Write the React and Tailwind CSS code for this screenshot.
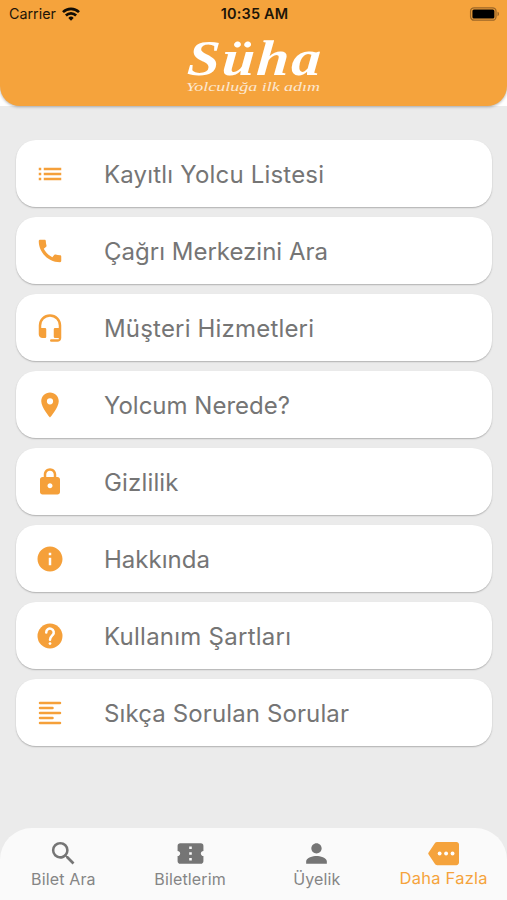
import React from 'react'
import {
  MdConfirmationNumber,
  MdInfo,
  MdList,
  MdPerson,
  MdSearch,
} from 'react-icons/md'

const icon = (children) => (
  <svg viewBox="0 0 24 24" className="size-[30px]" fill="currentColor">{children}</svg>
)

const items = [
  { label: 'Kayıtlı Yolcu Listesi', width: 220, icon: <MdList className="size-[30px]" /> },
  {
    label: 'Çağrı Merkezini Ara',
    width: 224,
    icon: icon(<path d="M20.01 15.38c-1.23 0-2.42-.2-3.53-.56a.98.98 0 0 0-1.01.24l-1.57 1.97c-2.83-1.35-5.48-3.9-6.89-6.83l1.95-1.66c.27-.28.35-.67.24-1.02-.37-1.11-.56-2.3-.56-3.53 0-.54-.45-.99-.99-.99H4.19C3.65 3 3 3.24 3 3.99 3 13.28 10.73 21 20.01 21c.71 0 .99-.63.99-1.18v-3.45c0-.54-.45-.99-.99-.99z" />),
  },
  {
    label: 'Müşteri Hizmetleri',
    width: 210,
    icon: icon(<path d="M12 1a9 9 0 0 0-9 9v7c0 1.66 1.34 3 3 3h2a1 1 0 0 0 1-1v-6a1 1 0 0 0-1-1H5v-2a7 7 0 0 1 14 0v2h-3a1 1 0 0 0-1 1v6a1 1 0 0 0 1 1h3v1h-6a1 1 0 0 0 0 2h5c1.66 0 3-1.34 3-3V10a9 9 0 0 0-9-9z" />),
  },
  {
    label: 'Yolcum Nerede?',
    width: 186,
    icon: icon(<path d="M12 2C8.13 2 5 5.13 5 9c0 5.25 7 13 7 13s7-7.75 7-13c0-3.87-3.13-7-7-7zm0 9.5a2.5 2.5 0 0 1 0-5 2.5 2.5 0 0 1 0 5z" />),
  },
  {
    label: 'Gizlilik',
    width: 74.5,
    icon: icon(<path d="M18 8h-1V6c0-2.76-2.24-5-5-5S7 3.24 7 6v2H6c-1.1 0-2 .9-2 2v10c0 1.1.9 2 2 2h12c1.1 0 2-.9 2-2V10c0-1.1-.9-2-2-2zm-6 9c-1.1 0-2-.9-2-2s.9-2 2-2 2 .9 2 2-.9 2-2 2zM9 8V6c0-1.66 1.34-3 3-3s3 1.34 3 3v2H9z" />),
  },
  { label: 'Hakkında', width: 106, icon: <MdInfo className="size-[30px]" /> },
  {
    label: 'Kullanım Şartları',
    width: 187,
    icon: icon(
      <>
        <circle cx="12" cy="12" r="10" />
        <path d="M9 9.2a3 3 0 1 1 5.2 1.9C13.2 12.2 12 12.9 12 15" fill="none" stroke="#fff" strokeWidth="2" strokeLinecap="round" />
        <circle cx="12" cy="18" r="1.1" fill="#fff" />
      </>
    ),
  },
  {
    label: 'Sıkça Sorulan Sorular',
    width: 245,
    icon: icon(<path d="M4 4h16M4 8h10M4 12h16M4 16h10M4 20h16" stroke="currentColor" strokeWidth="2" strokeLinecap="round" />),
  },
]

function MoreIcon({ className }) {
  return (
    <svg viewBox="0 0 24 24" className={className} fill="currentColor">
      <path d="M22 3H7c-.69 0-1.23.35-1.59.88L.37 11.45a1 1 0 0 0 0 1.11l5.04 7.56c.36.52.97.88 1.66.88H22c1.1 0 2-.9 2-2V5c0-1.1-.9-2-2-2z" />
      <circle cx="9" cy="12" r="1.5" fill="#fff" />
      <circle cx="14" cy="12" r="1.5" fill="#fff" />
      <circle cx="19" cy="12" r="1.5" fill="#fff" />
    </svg>
  )
}

const tabs = [
  { label: 'Bilet Ara', Icon: MdSearch },
  { label: 'Biletlerim', Icon: MdConfirmationNumber },
  { label: 'Üyelik', Icon: MdPerson },
  { label: 'Daha Fazla', Icon: MoreIcon, active: true },
]

function StatusBar() {
  return (
    <div className="grid grid-cols-3 items-center h-[27px] pl-[9px] pr-[7px] text-[14.3px] text-[#1d1508]">
      <div className="flex items-center gap-[6px]">
        <span>Carrier</span>
        <svg viewBox="0 0 18 14" className="w-[18px] h-[14px]" fill="none" stroke="#120d05" strokeWidth="2.6">
          <path d="M1 5.2a11.3 11.3 0 0 1 16 0" />
          <path d="M3.9 8.5a7.2 7.2 0 0 1 10.2 0" />
          <path d="M9 13.8l-2.7-2.9a3.9 3.9 0 0 1 5.4 0z" fill="#120d05" stroke="none" />
        </svg>
      </div>
      <span className="text-center text-[14.5px] font-semibold whitespace-nowrap tracking-[0.15px]">10:35 AM</span>
      <svg viewBox="0 0 31 14" className="w-[31px] h-[14px] justify-self-end">
        <rect x="1.6" y="0.8" width="25.4" height="12.4" rx="3.5" fill="none" stroke="#9c6727" strokeWidth="1.3" />
        <rect x="3.4" y="2.6" width="22" height="8.8" rx="1.5" fill="#000" />
        <path d="M28.5 4.8c2 .6 2 3.8 0 4.4z" fill="#9c6727" />
      </svg>
    </div>
  )
}

export default function App() {
  return (
    <div className="flex flex-col h-[900px] w-[507px] overflow-hidden bg-[#ebebeb] font-[Inter,sans-serif]">
      <div className="bg-white h-[106px] shrink-0">
        <header className="h-[106px] rounded-b-[20px] bg-[#f5a33c] shadow-[0_1px_3px_rgba(0,0,0,0.3)]">
          <StatusBar />
          <svg viewBox="0 0 150 74" className="block mx-auto w-[150px] h-[74px]" fill="#fff">
            <text transform="translate(7.5 48) skewX(-4) scale(1.17 1)" fontSize="50" fontWeight="700" fontStyle="italic" letterSpacing="1.8" fontFamily="Liberation Serif, serif">Süha</text>
            <text x="7" y="64" fontSize="12" fontStyle="italic" textLength="134" lengthAdjust="spacingAndGlyphs" fontFamily="Liberation Serif, serif" opacity="0.75">Yolculuğa ilk adım</text>
          </svg>
        </header>
      </div>

      <main className="flex flex-1 flex-col gap-[10px] pt-[34.4px] pl-4 pr-[15px]">
        {items.map((item) => (
          <button key={item.label} className="flex items-center h-[67px] shrink-0 rounded-[20px] bg-white pl-[19px] pt-px text-left shadow-[0_1px_1.5px_rgba(0,0,0,0.25)]">
            <span className="w-[69px] text-[#f5a03a]">{item.icon}</span>
            <svg className="h-[34px] overflow-visible" width={item.width} fill="#757575">
              <text x="0" y="26.2" fontSize="24" textLength={item.width}>{item.label}</text>
            </svg>
          </button>
        ))}
      </main>

      <nav className="grid grid-cols-4 h-[72px] shrink-0 rounded-t-[32px] bg-[#fafafa] pt-[10px]">
        {tabs.map(({ label, Icon, active }) => (
          <a key={label} className={active ? 'flex flex-col items-center text-[#f5a33c]' : 'flex flex-col items-center text-[#757575]'}>
            <Icon className="size-[31px]" />
            <span className={active ? 'text-[16.5px] leading-[19px] tracking-[0.25px]' : 'text-[16px] leading-[21px] tracking-[0.15px] text-[#858585]'}>{label}</span>
          </a>
        ))}
      </nav>
    </div>
  )
}
